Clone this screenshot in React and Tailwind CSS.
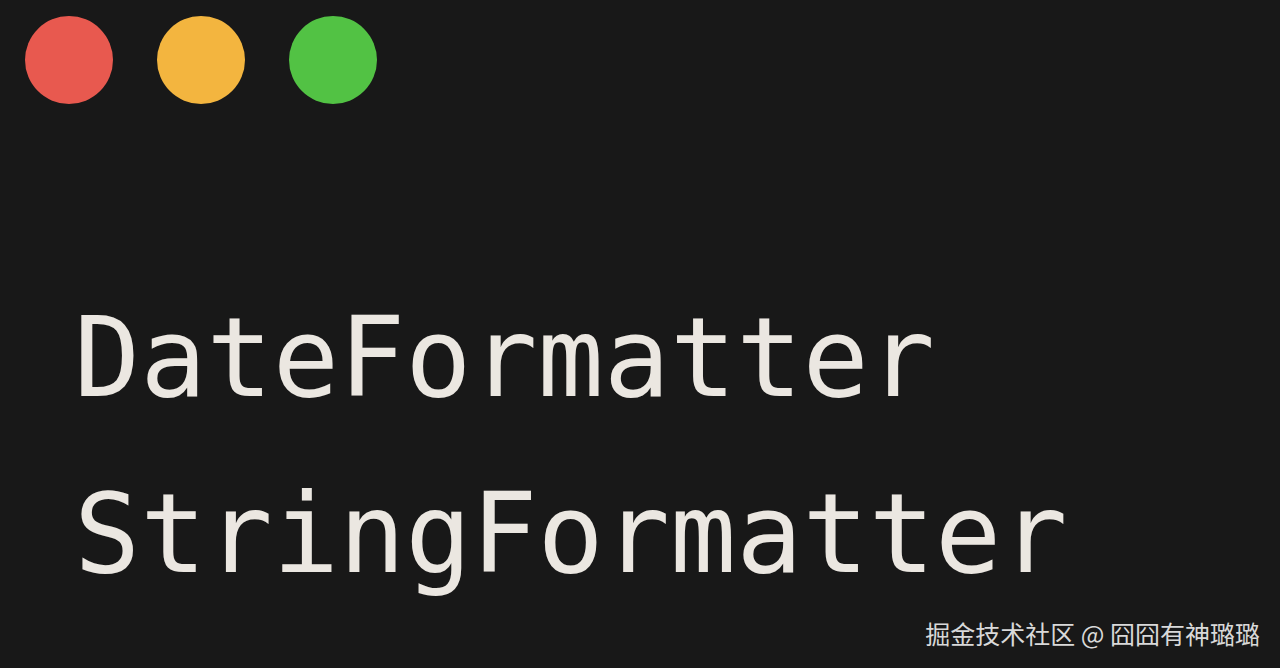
import React from 'react';

const lines = ['DateFormatter', 'StringFormatter'];

function App() {
  return (
    <div className="relative w-[1280px] h-[668px] overflow-hidden bg-[#181818]">
      {/* window controls */}
      <div className="flex gap-[44px] pl-[25px] pt-[16px]">
        <div className="w-[88px] h-[88px] rounded-full bg-[#e8594f]" />
        <div className="w-[88px] h-[88px] rounded-full bg-[#f3b53f]" />
        <div className="w-[88px] h-[88px] rounded-full bg-[#52c244]" />
      </div>

      {/* code */}
      <div className="pl-[74px] mt-[166px] font-['DejaVu_Sans_Mono',monospace] text-[110px] leading-[176px] text-[#ebe7e1]">
        {lines.map((line) => (
          <div key={line}>{line}</div>
        ))}
      </div>

      {/* watermark */}
      <div className="absolute right-[20px] bottom-[16px] font-['Noto_Sans_CJK_SC',sans-serif] text-[25px] text-[#d9d9d9]">
        掘金技术社区 @ 囧囧有神璐璐
      </div>
    </div>
  );
}

export default App;
